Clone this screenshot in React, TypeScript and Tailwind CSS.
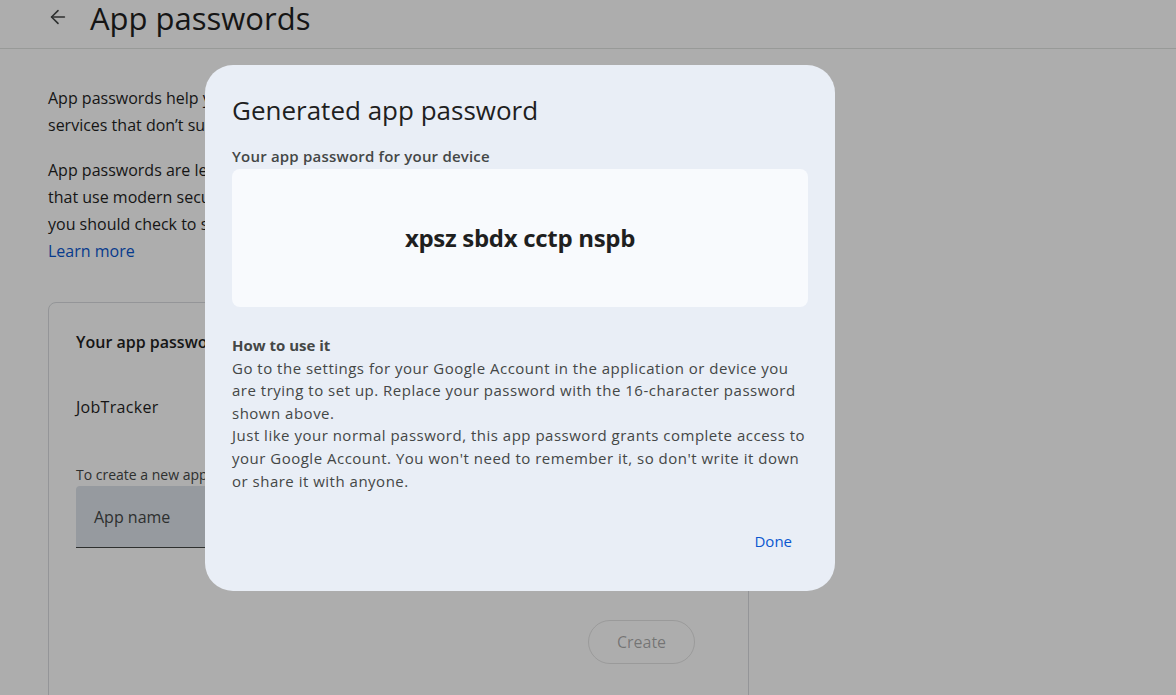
import { ArrowLeft } from "lucide-react";

const sans = "font-['Open_Sans','Roboto',sans-serif]";

function PageBehind() {
    return (
        <div className={`min-h-[695px] bg-white text-[#1f1f1f] ${sans}`}>
            <header className="h-[49px] border-b border-[#e1e3e1] flex items-start">
                <div className="w-[90px] flex justify-start pl-[47px] pt-[6px]">
                    <ArrowLeft size={22} strokeWidth={1.75} className="text-[#444746]" />
                </div>
                <h1 className="text-[31px] leading-[36px] text-[#1f1f1f]">App passwords</h1>
            </header>

            <div className="pl-[48px] pt-[36px] w-[749px]">
                <p className="text-[16px] leading-[27px] text-[#1f1f1f]">
                    App passwords help you sign into your Google Account on older apps and
                    <br />
                    services that don’t support modern security standards.
                </p>
                <p className="mt-[18px] text-[16px] leading-[27px] text-[#1f1f1f]">
                    App passwords are less secure than using up-to-date apps and services
                    <br />
                    that use modern security standards. Before you create an app password,
                    <br />
                    you should check to see if your app needs this in order to sign in.
                    <br />
                    <span className="text-[#0b57d0]">Learn more</span>
                </p>

                <div className="mt-[37px] border border-[#dadce0] rounded-[8px] px-[27px] pt-[27px] pb-[40px]">
                    <h2 className="text-[16px] leading-[24px] font-semibold">Your app passwords</h2>
                    <div className="mt-[41px] text-[16px] leading-[24px] tracking-[0.3px]">JobTracker</div>
                    <p className="mt-[46px] text-[14px] leading-[20px] text-[#444746]">
                        To create a new app specific password, type a name for it below...
                    </p>
                    <div className="mt-[1px] w-[472px] h-[62px] bg-[#dde3ea] rounded-t-[4px] border-b border-[#444746] flex items-center px-[18px]">
                        <span className="text-[16px] text-[#444746]">App name</span>
                    </div>
                    <div className="flex justify-end mt-[72px] pr-[26px]">
                        <button className="h-[44px] w-[107px] rounded-full border border-[#1f1f1f]/[0.12] text-[16px] text-[#1f1f1f]/[0.38] font-medium">
                            Create
                        </button>
                    </div>
                </div>
            </div>
        </div>
    );
}

export default function App() {
    return (
        <div className="relative w-[1176px] h-[695px] overflow-hidden">
            <PageBehind />

            <div className="fixed inset-0 bg-black/[0.32]" />

            <div className={`fixed left-[205px] top-[65px] w-[630px] h-[526px] rounded-[28px] bg-[#e9eef6] px-[27px] pt-[28px] text-[#1f1f1f] ${sans}`}>
                <h2 className="text-[26px] leading-[34px]">Generated app password</h2>
                <div className="mt-[19px] text-[15px] leading-[20px] font-semibold tracking-[0.2px] text-[#444746]">Your app password for your device</div>
                <div className="mt-[3px] h-[138px] rounded-[8px] bg-[#f8fafd] flex items-center justify-center">
                    <span className="text-[24px] font-bold tracking-[-0.3px] text-[#1f1f1f]">xpsz sbdx cctp nspb</span>
                </div>

                <div className="mt-[27px] text-[15px] leading-[22.6px] tracking-[0.5px] text-[#444746]">
                    <div className="font-bold tracking-normal">How to use it</div>
                    <p>
                        Go to the settings for your Google Account in the application or device you are trying to set up. Replace your password with the 16-character password shown above.
                    </p>
                    <p>
                        Just like your normal password, this app password grants complete access to your Google Account. You won&apos;t need to remember it, so don&apos;t write it down or share it with anyone.
                    </p>
                </div>

                <div className="flex justify-end mt-[38px] pr-[16px]">
                    <button className="text-[15px] font-medium text-[#0b57d0]">Done</button>
                </div>
            </div>
        </div>
    );
}
